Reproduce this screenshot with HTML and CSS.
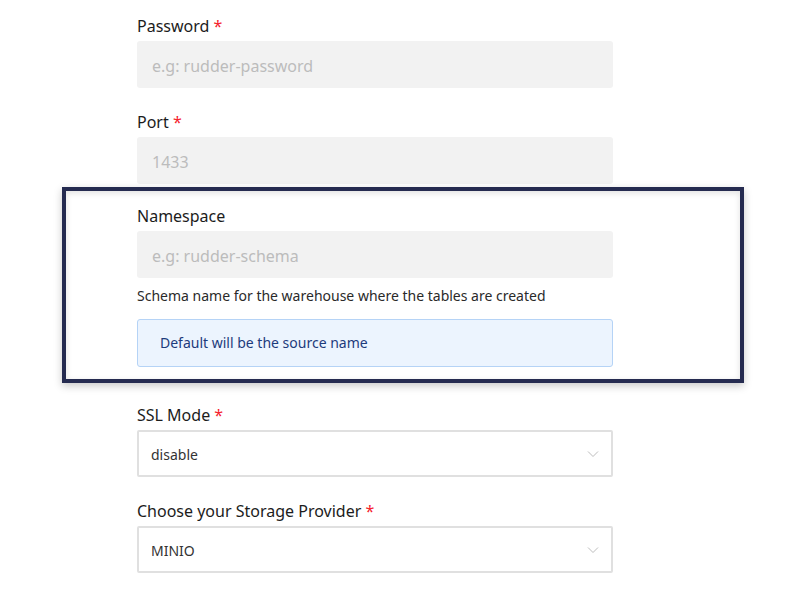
FILE: index.html
```html
<!DOCTYPE html>
<html>
<head>
<meta charset="utf-8">
<link rel="stylesheet" href="styles.css">
</head>
<body>
<div class="form">
  <div class="field">
    <div class="label">Password <span class="req">*</span></div>
    <div class="input placeholder">e.g: rudder-password</div>
  </div>
  <div class="field">
    <div class="label">Port <span class="req">*</span></div>
    <div class="input placeholder">1433</div>
  </div>
  <div class="frame">
    <div class="label">Namespace</div>
    <div class="input placeholder">e.g: rudder-schema</div>
    <div class="help">Schema name for the warehouse where the tables are created</div>
    <div class="info">Default will be the source name</div>
  </div>
  <div class="field">
    <div class="label">SSL Mode <span class="req">*</span></div>
    <div class="select"><span>disable</span>
      <svg class="chev" width="12" height="8" viewBox="0 0 12 8"><path d="M1 1.5 L6 6.5 L11 1.5" fill="none" stroke="#bdbdbd" stroke-width="1"/></svg>
    </div>
  </div>
  <div class="field">
    <div class="label">Choose your Storage Provider <span class="req">*</span></div>
    <div class="select"><span>MINIO</span>
      <svg class="chev" width="12" height="8" viewBox="0 0 12 8"><path d="M1 1.5 L6 6.5 L11 1.5" fill="none" stroke="#bdbdbd" stroke-width="1"/></svg>
    </div>
  </div>
</div>
</body>
</html>
```
FILE: styles.css
```css
html, body {
  margin: 0;
  padding: 0;
  background: #fff;
}
body {
  font-family: "Noto Sans", "Open Sans", sans-serif;
  color: #1c1c1c;
}
.form {
  width: 476px;
  margin-left: 137px;
  padding-top: 15px;
}
.field {
  margin-bottom: 23px;
}
.label {
  font-size: 16px;
  line-height: 22px;
  height: 22px;
  margin-bottom: 4px;
  color: #1c1c1c;
}
.req {
  color: #f5222d;
}
.input {
  box-sizing: border-box;
  height: 47px;
  background: #f2f2f2;
  border-radius: 3px;
  padding: 3px 0 0 15px;
  font-size: 16px;
  line-height: 44px;
  overflow: hidden;
}
.placeholder {
  color: #bcbcbc;
}
.frame {
  margin: -20px -131px 21px -75px;
  padding: 14px 127px 12px 71px;
  border: 4px solid #252b50;
  box-shadow: 0 3px 8px rgba(0,0,0,0.22), inset 0 2px 6px rgba(0,0,0,0.12);
}
.help {
  font-size: 14px;
  line-height: 20px;
  color: #2a2a2a;
  margin-top: 8px;
}
.info {
  box-sizing: border-box;
  margin-top: 13px;
  height: 48px;
  background: #ecf4fe;
  border: 1.5px solid #b5d3f6;
  border-radius: 3px;
  padding-left: 22px;
  font-size: 14px;
  line-height: 45px;
  color: #1d3b7c;
}
.select {
  box-sizing: border-box;
  height: 47px;
  border: 2px solid #e0e0e0;
  border-radius: 2px;
  padding: 1px 12px 0 12px;
  display: flex;
  align-items: center;
  justify-content: space-between;
  font-size: 14px;
  color: #333;
}
.chev {
  display: block;
}
```
